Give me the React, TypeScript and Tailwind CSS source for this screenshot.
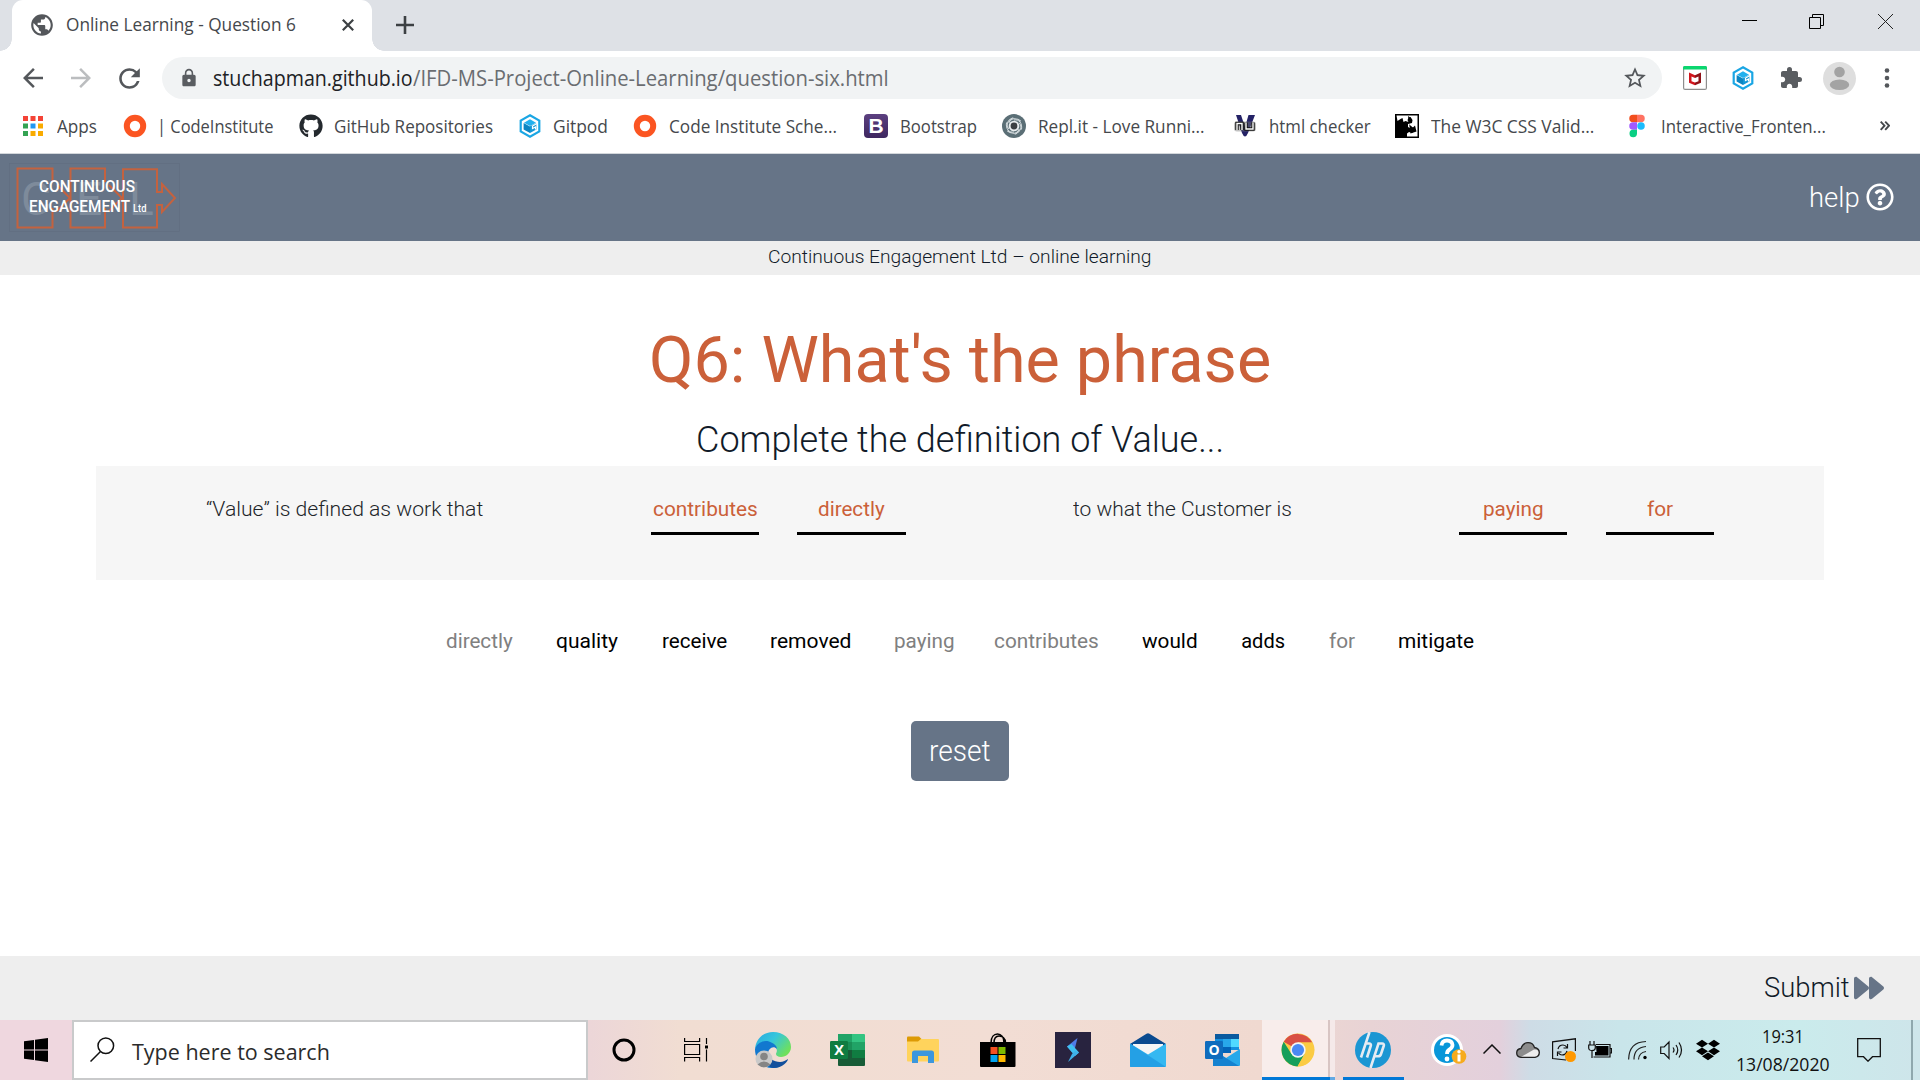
import { useLayoutEffect, useRef, useState, type ReactNode } from "react";
import { MdPublic, MdArrowBack, MdArrowForward, MdRefresh, MdLock, MdStarBorder, MdExtension } from "react-icons/md";
import { FaGithub, FaDropbox, FaForward, FaRegQuestionCircle } from "react-icons/fa";

/* One line of text, condensed or widened to fill its box. */
function Fit({ className, children }: { className: string; children: ReactNode }) {
  const outer = useRef<HTMLSpanElement>(null);
  const inner = useRef<HTMLSpanElement>(null);
  const [scale, setScale] = useState(1);
  useLayoutEffect(() => {
    if (outer.current && inner.current) setScale(outer.current.clientWidth / inner.current.offsetWidth);
  }, []);
  return (
    <span ref={outer} className={`block shrink-0 whitespace-nowrap ${className}`}>
      <span ref={inner} className="inline-block origin-left align-top" style={{ transform: `scaleX(${scale})` }}>
        {children}
      </span>
    </span>
  );
}

function GitpodIcon() {
  return (
    <svg viewBox="0 0 24 24" className="h-6 w-6">
      <path d="M12 1.300 21.300 6.600V17.400L12 22.700 2.700 17.400V6.600Z" fill="#fff" stroke="#1aa6e4" strokeWidth="2.200" />
      <path d="M12 5.300 18 8.700 12 12 6 8.700Z" fill="#22b0ee" />
      <path d="M5.600 9 12 12.500V19L5.600 15.400Z" fill="#0b85c2" />
      <path d="M12 12.300 18.400 9V15.400L12 19Z" fill="#1397d6" />
      <path d="M19.500 9.200 14.500 12V14.500L17.500 13V15.500" fill="none" stroke="#fff" strokeWidth="1.200" />
    </svg>
  );
}

function RingIcon() {
  return (
    <svg viewBox="0 0 24 24" className="h-6 w-6">
      <circle cx="12" cy="12" r="8.2" fill="none" stroke="#fb5522" strokeWidth="6" />
    </svg>
  );
}

function AppsIcon() {
  return (
    <svg viewBox="0 0 20 20" className="h-5 w-5">
      <path d="M0 0h5v5H0zM7.5 0h5v5h-5zM15 0h5v5h-5z" fill="#f44336" />
      <path d="M0 7.5h5v5H0zM0 15h5v5H0z" fill="#34a353" />
      <path d="M7.5 7.5h5v5h-5z" fill="#2196f3" />
      <path d="M15 7.5h5v5h-5zM7.5 15h5v5h-5zM15 15h5v5h-5z" fill="#f9ab00" />
    </svg>
  );
}

function BootstrapIcon() {
  return (
    <span className="flex h-6 w-6 items-center justify-center rounded-[4px] bg-gradient-to-b from-[#5c4080] to-[#3e2760] font-['Liberation_Sans'] text-[21px] leading-none font-bold text-white">
      B
    </span>
  );
}

function ReplIcon() {
  return (
    <svg viewBox="0 0 24 24" className="h-6 w-6">
      <circle cx="12" cy="12" r="12" fill="#5b6f76" />
      <g fill="none" stroke="#d5dcdf" strokeWidth="1">
        {[0, 60, 120, 180, 240, 300].map((a) => (
          <path key={a} d="M12 6C17 5 20.500 9 19.500 15.500" transform={`rotate(${a} 12 12)`} />
        ))}
      </g>
      <circle cx="12" cy="12" r="5.300" fill="#e8ecee" />
      <circle cx="12" cy="12" r="3.400" fill="#3b3f42" />
    </svg>
  );
}

function NuIcon() {
  return (
    <svg viewBox="0 0 24 24" className="h-6 w-6">
      <path d="M3 1h5l4 12 3.500-12H22l-7 18q-3 7-6 0Z" fill="#242266" />
      <rect x="1" y="7.500" width="22" height="10" rx="3" fill="#777" opacity=".45" />
      <path d="M4 16V9.500h5V16M13 8.500v6.500h7V8.500" fill="none" stroke="#111" strokeWidth="3.400" />
      <path d="M4 16V9.500h5V16M13 8.500v6.500h7V8.500" fill="none" stroke="#fff" strokeWidth="1.400" />
    </svg>
  );
}

function CssValidatorIcon() {
  return (
    <svg viewBox="0 0 24 24" className="h-6 w-6">
      <path d="M0 0h24v24H0z" />
      <path
        d="M1.500 1.500h21v21H12v-3l2-1.500 3 1 2-2v-3l-3.500-2-.5 2-2-1v-3l4-1 .5-3-2-3-2 1-1 2 1 2-3-1-2 1-1-4-2 1-3 2Z"
        fill="#fff"
      />
      <path d="M13 2l3 2 .5 4-3 1.500 3 3 .5 2 3-3 1.500 6-3 1-3 1" />
    </svg>
  );
}

function FigmaIcon() {
  return (
    <svg viewBox="0 0 16 24" className="h-6 w-4">
      <path d="M4 .8h4v7.500H4a3.750 3.750 0 0 1 0-7.500Z" fill="#f24e1e" />
      <path d="M8 .8h4a3.750 3.750 0 0 1 0 7.500H8Z" fill="#ff7262" />
      <path d="M4 8.300h4v7.500H4a3.750 3.750 0 0 1 0-7.500Z" fill="#a259ff" />
      <circle cx="12" cy="12" r="3.750" fill="#1abcfe" />
      <path d="M4 15.800h4v3.750a3.750 3.750 0 1 1-4-3.750Z" fill="#0acf83" />
    </svg>
  );
}

function McAfeeIcon() {
  return (
    <svg viewBox="0 0 24 24" className="h-6 w-6">
      <rect x=".6" y=".6" width="22.800" height="22.800" rx="1.500" fill="#fff" stroke="#8e8e8e" strokeWidth="1.200" />
      <path d="M0 3.400V1.500Q0 0 1.500 0h21Q24 0 24 1.500V3.400Z" fill="#0bd66f" />
      <path d="M12 9.300 6 6.500V16.800L12 19.200V16.600L8.500 15.200V10.500L12 12Z" fill="#d0141c" />
      <path d="M12 9.300 18 6.500V16.800L12 19.200V16.600L15.500 15.200V10.500L12 12Z" fill="#8f1218" />
    </svg>
  );
}

function BrowserTabs() {
  return (
    <div className="flex h-[51px] items-center bg-[#dee1e6]">
      <div className="relative ml-3 flex h-[51px] w-[360px] items-center rounded-t-[11px] bg-white">
        <span className="absolute bottom-0 -left-3 h-3 w-3 bg-[radial-gradient(circle_at_0_0,#dee1e6_11.5px,#fff_12px)]" />
        <span className="absolute -right-3 bottom-0 h-3 w-3 bg-[radial-gradient(circle_at_100%_0,#dee1e6_11.5px,#fff_12px)]" />
        <MdPublic className="mb-0.5 ml-[17px] h-[26px] w-[26px] text-[#54575b]" />
        <Fit className="mb-[3px] ml-[11px] w-[230px] text-[18px] leading-6 text-[#45484c]">Online Learning - Question 6</Fit>
        <svg viewBox="0 0 12 12" className="mb-px ml-[46px] h-3 w-3">
          <path d="M.8.8 11.200 11.200M11.200.8.8 11.200" stroke="#3c4043" strokeWidth="2.200" />
        </svg>
      </div>
      <svg viewBox="0 0 18 18" className="mb-px ml-6 h-[18px] w-[18px]">
        <path d="M9 0v18M0 9h18" stroke="#3c4043" strokeWidth="2.600" />
      </svg>
      <div className="mr-[27px] mb-2 ml-auto flex items-center gap-[53px]">
        <svg viewBox="0 0 15 15" className="-mr-px h-[15px] w-[15px]">
          <path d="M0 6.500h15" stroke="#000" />
        </svg>
        <svg viewBox="0 0 15 15" className="mr-px h-[15px] w-[15px]" fill="none" stroke="#000">
          <path d="M.5 3.500h11v11H.5zM3.500 3.500V.5h11v11h-3" />
        </svg>
        <svg viewBox="0 0 15 15" className="h-[15px] w-[15px]" stroke="#222">
          <path d="M0 0l15 15M15 0 0 15" />
        </svg>
      </div>
    </div>
  );
}

function Toolbar() {
  return (
    <div className="flex h-[54px] items-center bg-white">
      <MdArrowBack className="ml-[18px] h-[30px] w-[30px] text-[#54575b]" />
      <MdArrowForward className="ml-[18px] h-[30px] w-[30px] text-[#bbbdbf]" />
      <MdRefresh className="ml-[18px] h-[31px] w-[31px] text-[#54575b]" />
      <div className="ml-[17px] flex h-[42px] w-[1500px] items-center rounded-full bg-[#f1f3f4]">
        <MdLock className="ml-[17px] h-5 w-5 text-[#5a5d61]" />
        <div className="ml-[14px] flex text-[21px] leading-7">
          <Fit className="w-[200px] text-[#202124]">stuchapman.github.io</Fit>
          <Fit className="w-[476px] text-[#6a6d71]">/IFD-MS-Project-Online-Learning/question-six.html</Fit>
        </div>
        <MdStarBorder className="mr-[14px] ml-auto h-[26px] w-[26px] text-[#54575b]" />
      </div>
      <span className="ml-[21px]"><McAfeeIcon /></span>
      <span className="ml-6"><GitpodIcon /></span>
      <MdExtension className="ml-6 h-6 w-6 text-[#5a5d61]" />
      <svg viewBox="0 0 33 33" className="ml-[20px] h-[33px] w-[33px]">
        <circle cx="16.500" cy="16.500" r="16.500" fill="#dedede" />
        <circle cx="16.500" cy="10" r="5.300" fill="#a3a3a3" />
        <ellipse cx="16.500" cy="22.800" rx="9.700" ry="5.200" fill="#a3a3a3" />
      </svg>
      <svg viewBox="0 0 6 22" className="ml-[28px] h-[22px] w-1.5" fill="#54575b">
        <circle cx="3" cy="3.500" r="2.300" />
        <circle cx="3" cy="11" r="2.300" />
        <circle cx="3" cy="18.500" r="2.300" />
      </svg>
    </div>
  );
}

function Bookmarks() {
  return (
    <div className="flex h-[49px] items-center border-b border-[#d3d7db] bg-white pb-[7px] text-[18px] leading-6 text-[#45484c]">
      <span className="ml-[23px]"><AppsIcon /></span>
      <Fit className="ml-[14px] w-10">Apps</Fit>
      <span className="ml-[26px]"><RingIcon /></span>
      <Fit className="ml-[10px] w-[116px]">| CodeInstitute</Fit>
      <FaGithub className="ml-[26px] h-6 w-6 text-[#24292e]" />
      <Fit className="ml-[11px] w-[159px]">GitHub Repositories</Fit>
      <span className="ml-[25px]"><GitpodIcon /></span>
      <Fit className="ml-[11px] w-[55px]">Gitpod</Fit>
      <span className="ml-[25px]"><RingIcon /></span>
      <Fit className="ml-[12px] w-[168px]">Code Institute Sche...</Fit>
      <span className="ml-[27px]"><BootstrapIcon /></span>
      <Fit className="ml-[12px] w-[77px]">Bootstrap</Fit>
      <span className="ml-[25px]"><ReplIcon /></span>
      <Fit className="ml-[12px] w-[167px]">Repl.it - Love Runni...</Fit>
      <span className="ml-[28px]"><NuIcon /></span>
      <Fit className="ml-[12px] w-[102px]">html checker</Fit>
      <span className="ml-[24px]"><CssValidatorIcon /></span>
      <Fit className="ml-[12px] w-[163px]">The W3C CSS Valid...</Fit>
      <span className="ml-[35px]"><FigmaIcon /></span>
      <Fit className="ml-[16px] w-[165px]">Interactive_Fronten...</Fit>
      <svg viewBox="0 0 10 10" className="ml-[54px] h-2.5 w-2.5" fill="none" stroke="#45484c" strokeWidth="1.900">
        <path d="M.7.7 4.500 4.700.7 8.800M5.200.7 9 4.700 5.200 8.800" />
      </svg>
    </div>
  );
}

function CompanyLogo() {
  return (
    <svg viewBox="0 0 174 72" className="ml-2 h-[72px] w-[174px]" fontFamily="Roboto, sans-serif">
      <rect x="1.500" y="1.500" width="170" height="68" fill="none" stroke="#5f6d7f" strokeWidth=".6" />
      <g fill="#a3aebb" fontSize="46" opacity=".4">
        <text x="13" y="53">C</text>
        <text x="68" y="53">E</text>
        <text x="121" y="53">L</text>
      </g>
      <g fill="none" stroke="#c4623f" strokeWidth="2">
        <path d="M44.500 20V6.500h-35V65.500h35V46M97 20V6.500H62.500V65.500H97V46" />
        <path d="M149 30V7.200H115V65.500h34V43h5v7l13-14-13-14v8Z" />
        <path d="M49 23 62 36 49 49M101 23 114 36 101 49" />
      </g>
      <g fill="#fff" fontWeight="500">
        <text x="31" y="29.500" fontSize="16.500" textLength="96" lengthAdjust="spacingAndGlyphs">CONTINUOUS</text>
        <text x="21" y="50" fontSize="16.500" textLength="101" lengthAdjust="spacingAndGlyphs">ENGAGEMENT</text>
        <text x="125" y="50" fontSize="10.500" textLength="13.500" lengthAdjust="spacingAndGlyphs">Ltd</text>
      </g>
    </svg>
  );
}

const blank = "border-b-[3px] border-black h-[38px] flex justify-center text-[#cb6039]";

function Quiz() {
  return (
    <div className="flex h-[866px] flex-col bg-white font-['Roboto',sans-serif]">
      <header className="flex h-[87px] items-center bg-[#667487]">
        <CompanyLogo />
        <div className="mr-[26px] ml-auto flex items-center text-white">
          <Fit className="w-[51px] text-[28px] leading-8 font-[350]">help</Fit>
          <FaRegQuestionCircle className="mb-px ml-[6px] h-[28px] w-[28px]" />
        </div>
      </header>
      <div className="flex h-[34px] justify-center bg-[#eee] pt-[4px]">
        <Fit className="w-[384px] text-[19px] leading-6 font-[350] text-[#111b29]">Continuous Engagement Ltd – online learning</Fit>
      </div>
      <main className="flex h-[681px] flex-col items-center">
        <h1 className="mt-[54px]">
          <Fit className="w-[622px] text-[64px] leading-[64px] font-[450] text-[#cb6039]">Q6: What's the phrase</Fit>
        </h1>
        <h2 className="mt-[27px]">
          <Fit className="w-[528px] text-[36px] leading-10 font-[350] text-[#111b29]">Complete the definition of Value...</Fit>
        </h2>
        <div className="mt-1.5 flex h-[114px] w-[1728px] bg-[#f6f6f6] pt-[31px] text-[20px] leading-6">
          <Fit className="ml-[110px] w-[277px] font-[350] text-[#212529]">“Value” is defined as work that</Fit>
          <div className={`ml-[168px] w-[108px] ${blank}`}><Fit className="w-[105px]">contributes</Fit></div>
          <div className={`ml-[38px] w-[109px] ${blank}`}><Fit className="w-[67px]">directly</Fit></div>
          <Fit className="ml-[167px] w-[219px] font-[350] text-[#212529]">to what the Customer is</Fit>
          <div className={`ml-[167px] w-[108px] ${blank}`}><Fit className="w-[61px]">paying</Fit></div>
          <div className={`ml-[39px] w-[108px] ${blank}`}><Fit className="w-[26px]">for</Fit></div>
        </div>
        <div className="mt-[49px] flex gap-[43.3px] text-[20px] leading-6 text-black">
          <Fit className="w-[67px] text-[#808080]">directly</Fit>
          <Fit className="w-[62px]">quality</Fit>
          <Fit className="w-[65px]">receive</Fit>
          <Fit className="w-[81px]">removed</Fit>
          <Fit className="-mr-[5px] w-[61px] text-[#808080]">paying</Fit>
          <Fit className="w-[105px] text-[#808080]">contributes</Fit>
          <Fit className="w-[56px]">would</Fit>
          <Fit className="w-[44px]">adds</Fit>
          <Fit className="w-[26px] text-[#808080]">for</Fit>
          <Fit className="w-[76px]">mitigate</Fit>
        </div>
        <button className="mt-[68px] flex h-[60px] w-[98px] items-center justify-center rounded-[5px] bg-[#667487] text-white">
          <Fit className="w-[62px] text-[29px] leading-8 font-[350]">reset</Fit>
        </button>
      </main>
      <footer className="flex h-16 items-center bg-[#eee]">
        <Fit className="ml-[1764px] w-[86px] text-[28px] leading-8 font-[350] text-[#111b29]">Submit</Fit>
        <FaForward className="ml-[4px] h-[30px] w-[30px] text-[#667487]" />
      </footer>
    </div>
  );
}

function EdgeIcon() {
  return (
    <svg viewBox="0 0 36 36" className="h-9 w-9">
      <defs>
        <linearGradient id="edgeTop" x1="0" y1="0" x2="1" y2=".6">
          <stop offset="0" stopColor="#2aa8e0" />
          <stop offset=".5" stopColor="#35c6dc" />
          <stop offset="1" stopColor="#6fe05c" />
        </linearGradient>
      </defs>
      <path d="M0 17C1 6 9 0 18 0 29 0 36 7 36 15 36 21 31 25 26 25 22 25 20 23 21.500 20.500 23 17 20 12 14 11 8 10 2 13 0 17Z" fill="url(#edgeTop)" />
      <path d="M0 17C2 11 8 8 14 9.500 19 11 22 14 22 17 18 13 13 17 13 22 13 29 19 35 24 35 11 39 0 31 0 17Z" fill="#1278cf" />
      <path d="M13 21C13 26 19 30 25 30 28 30 31 28 33 27 33 29 28 36 18 36 11 35 9 25 13 21Z" fill="#124f9c" />
      <circle cx="9" cy="27" r="8.500" fill="#c9c9c9" />
      <circle cx="9" cy="24.500" r="3.800" fill="#858585" />
      <path d="M2.500 32.500q6.500-6 13 0Q9 38 2.500 32.500Z" fill="#858585" />
    </svg>
  );
}

function ExcelIcon() {
  return (
    <svg viewBox="0 0 36 36" className="h-9 w-9">
      <path d="M8 2h14v8H8z" fill="#21a366" />
      <path d="M22 2h12q1 0 1 1v7H22z" fill="#33c481" />
      <path d="M8 10h14v8H8z" fill="#1a8f56" />
      <path d="M22 10h13v8H22z" fill="#21a366" />
      <path d="M8 18h14v8H8z" fill="#185c37" />
      <path d="M22 18h13v8H22z" fill="#107c41" />
      <path d="M8 26h27v7q0 1-1 1H9q-1 0-1-1Z" fill="#185c37" />
      <rect y="9" width="18" height="18" rx="1.200" fill="#107c41" />
      <text x="9" y="23" textAnchor="middle" fill="#fff" fontSize="14.500" fontWeight="bold" fontFamily="Open Sans, sans-serif">X</text>
    </svg>
  );
}

function ExplorerIcon() {
  return (
    <svg viewBox="0 0 32 28" className="h-7 w-8">
      <path d="M0 1.500Q0 .5 1 .5h11l3 3V6H0Z" fill="#dd9a05" />
      <path d="M0 5.500h11l3-2.500h17q1 0 1 1v20.500q0 1-1 1H1q-1 0-1-1Z" fill="#ffd35c" />
      <path d="M5 27V17q0-2.500 2.500-2.500h17Q27 14.500 27 17v10h-6v-7H11v7Z" fill="#3c97dd" />
    </svg>
  );
}

function StoreIcon() {
  return (
    <svg viewBox="0 0 36 34" className="h-[34px] w-9">
      <g fill="none" stroke="#000" strokeWidth="1.500">
        <path d="M11 10C11 4 14 1 17.500 1S24 4 24 10M14 10C14 5 16 3 19 3S25.500 5 25.500 10" />
      </g>
      <path d="M0 9h35.500v24q0 1-1 1H1q-1 0-1-1Z" />
      <path d="M10.500 14h7v7h-7z" fill="#f25022" />
      <path d="M18.500 14h7v7h-7z" fill="#7fba00" />
      <path d="M10.500 22h7v7h-7z" fill="#00a4ef" />
      <path d="M18.500 22h7v7h-7z" fill="#ffb900" />
    </svg>
  );
}

function SwitchAppIcon() {
  return (
    <svg viewBox="0 0 36 36" className="h-9 w-9">
      <path d="M0 0h36v36H0z" fill="#28233f" />
      <path d="M22.500 6 12 14.500 17 20 20 16Z" fill="#4f7ce8" />
      <path d="M12 14.500 16.500 12 24 20.500 20 24Z" fill="#3fc0f0" />
      <path d="M24 20.500 13 30 17 22 20 19Z" fill="#3fb0e8" />
    </svg>
  );
}

function MailIcon() {
  return (
    <svg viewBox="0 0 36 34" className="h-[34px] w-9">
      <path d="M0 11 16.500.7q1.500-1 3 0L36 11 28 18H8Z" fill="#0a4a8f" />
      <path d="M3 11h30v16H3z" fill="#f5f5f5" />
      <path d="M0 10.500 18 21.500 36 10.500V33q0 1-1 1H1q-1 0-1-1Z" fill="#35b8f1" />
      <path d="M0 34V10.500L36 34Z" fill="#1e96e0" opacity=".7" />
    </svg>
  );
}

function OutlookIcon() {
  return (
    <svg viewBox="0 0 36 36" className="h-9 w-9">
      <path d="M10 2h24v16H10z" fill="#1490df" />
      <path d="M10 2h24v5H10z" fill="#0a5a9f" />
      <path d="M18 7h8v8h-8z" fill="#28a8ea" />
      <path d="M26 7h8v8h-8z" fill="#50d9ff" />
      <path d="M18 15h8v6h-8z" fill="#0364b8" />
      <path d="M8 18 21 26 35 17v16q0 1-1 1H9q-1 0-1-1Z" fill="#28a8ea" />
      <path d="M8 34V18L34 34Z" fill="#1582d0" />
      <rect y="9" width="18" height="18" rx="1.200" fill="#0f6cbd" />
      <text x="9" y="23" textAnchor="middle" fill="#fff" fontSize="14" fontWeight="bold" fontFamily="Open Sans, sans-serif">O</text>
    </svg>
  );
}

function ChromeIcon() {
  return (
    <svg viewBox="0 0 34 34" className="h-[34px] w-[34px]">
      <circle cx="17" cy="17" r="16.500" fill="#fbcb43" />
      <path d="M17 17 2.700 8.800A16.500 16.500 0 0 1 31.300 9.500H17Z" fill="#d94f43" />
      <path d="M2.700 8.800A16.500 16.500 0 0 0 16.500 33.500L24 20.500 10.500 21Z" fill="#159f5b" />
      <path d="M17 9.500H31.300A16.500 16.500 0 0 1 16.500 33.500L23.500 21Z" fill="#fbcb43" />
      <circle cx="17" cy="17" r="7.700" fill="#f4f4f4" />
      <circle cx="17" cy="17" r="6.100" fill="#4a89f3" />
    </svg>
  );
}

function HpIcon() {
  return (
    <svg viewBox="0 0 36 36" className="h-9 w-9">
      <circle cx="18" cy="18" r="18" fill="#1b96d3" />
      <g fill="none" stroke="#e6ebf2" strokeWidth="2.600">
        <path d="M14.500 0 6 25.500M10.800 11.500H14q2.500 0 1.700 2.500L12 25.500" />
        <path d="M15.500 36 23.500 11.500H27q2.500 0 1.700 2.500L26 22q-.8 2.300-3 2.300H19.500" />
      </g>
    </svg>
  );
}

function SupportIcon() {
  return (
    <svg viewBox="0 0 36 34" className="h-[34px] w-9">
      <circle cx="16" cy="17" r="16" fill="#fff" />
      <circle cx="16" cy="17" r="13" fill="#0996d9" />
      <path d="M10.500 12.500Q11 7.500 16 7.500T21.500 12Q21.500 14.500 18.500 16.500 16 18 16 21" fill="none" stroke="#fff" strokeWidth="3.800" />
      <circle cx="16" cy="26" r="2.400" fill="#fff" />
      <circle cx="28" cy="23.500" r="7.300" fill="#f6ab1d" />
      <path d="M28 21.500v7" stroke="#fff" strokeWidth="3" />
      <circle cx="28" cy="18.800" r="1.700" fill="#fff" />
    </svg>
  );
}

function Tray() {
  return (
    <>
      <svg viewBox="0 0 18 10" className="mb-0.5 ml-4 h-2.5 w-[18px]" fill="none" stroke="#111" strokeWidth="1.500">
        <path d="M.5 9.500 9 1l8.500 8.500" />
      </svg>
      <svg viewBox="0 0 24 16" className="ml-[15px] h-4 w-6">
        <path d="M5 15.300Q.7 15 .7 11T5 6.500Q7 .7 12 .7T18.500 5.500Q23.300 6.500 23.300 10.500T19 15.300Z" fill="#8c8c8c" />
        <path d="M5 15 18 7.500Q23 7 23 11T19 15Z" fill="#eee" />
        <path d="M5 15.300Q.7 15 .7 11T5 6.500Q7 .7 12 .7T18.500 5.500Q23.300 6.500 23.300 10.500T19 15.300Z" fill="none" stroke="#222" strokeWidth="1.300" />
      </svg>
      <svg viewBox="0 0 24 24" className="ml-3 h-6 w-6" fill="none" stroke="#111" strokeWidth="1.200">
        <path d="M23.400 13V.8L.6 3.800V20.500L14 22" />
        <path d="M6 11q1-4 5-4 2.500 0 4 2.500M15.500 6v4h-4M15 13q-1 4-5 4-2 0-3.500-2M5.500 18v-4h4" />
        <circle cx="18.500" cy="18.500" r="5.500" fill="#ff9800" stroke="none" />
      </svg>
      <svg viewBox="0 0 24 18" className="ml-3 h-[18px] w-6" fill="none" stroke="#111" strokeWidth="1.200">
        <path d="M8 3.500h14v12.500H5.500M22 7.500h1.500v4.500H22" />
        <path d="M8 5h12.500v9.500H7V11h1.500Z" fill="#000" stroke="none" />
        <path d="M2 0v4M6 0v4M.7 4h6.600V7q0 2.500-3.300 2.500T.7 7ZM4 9.500V17" />
      </svg>
      <svg viewBox="0 0 20 20" className="ml-4 h-5 w-5" fill="none" stroke="#222" strokeWidth="1.200">
        <path d="M.6 19.500Q1 2 18 1.500M6 19.500Q6 7.500 18 6.500M10.500 19.500Q11 12.500 18 11.500" />
        <circle cx="17" cy="17.500" r="1.700" fill="#000" stroke="none" />
      </svg>
      <svg viewBox="0 0 24 20" className="ml-3 h-5 w-6" fill="none" stroke="#111" strokeWidth="1.200">
        <path d="M.7 7v6.500h3.500L9 18.500V2L4.200 7ZM13 7.500q2 2.500 0 5M16 5q3.500 5 0 10M19 2.500q5 7.500 0 15" />
      </svg>
      <FaDropbox className="ml-[12px] h-6 w-6 text-black" />
      <div className="ml-4 flex w-[94px] flex-col items-center text-[18px] leading-7 text-[#111]">
        <Fit className="w-[42px]">19:31</Fit>
        <Fit className="w-[94px]">13/08/2020</Fit>
      </div>
      <svg viewBox="0 0 24 24" className="ml-[27px] h-6 w-6" fill="none" stroke="#111" strokeWidth="1.300">
        <path d="M.7.7h22.600v18H15.500l-4.500 4.500-4.500-4.500H.7Z" />
      </svg>
      <span className="ml-[30px] h-[60px] w-0.5 bg-[#8fa7ad]" />
    </>
  );
}

function Taskbar() {
  return (
    <div className="flex h-[60px] items-center bg-[linear-gradient(90deg,#efd7df_0px,#efd7df_70px,#ecd6d8_590px,#f1ddd2_680px,#f2ddd4_1000px,#f0d9d0_1260px,#e8d3d5_1370px,#e3d0dc_1500px,#cedce6_1530px,#c9e5ea_1620px,#caebec_1800px,#cee5ea_1920px)]">
      <svg viewBox="0 0 24 24" className="ml-6 h-6 w-6">
        <path d="M0 3.300 10 2V11.500H0ZM11 1.800 24 0V11.500H11ZM0 12.500H10V22L0 20.700ZM11 12.500H24V24L11 22.200Z" />
      </svg>
      <div className="ml-6 flex h-[60px] w-[516px] items-center border-2 border-[#c9cacb] bg-white">
        <svg viewBox="0 0 25 25" className="mb-0.5 ml-4 h-[25px] w-[25px]" fill="none" stroke="#111" strokeWidth="1.500">
          <circle cx="15.800" cy="8.800" r="7.800" />
          <path d="M10.500 14.500.5 24.500" />
        </svg>
        <Fit className="mt-1 ml-[17px] w-[198px] text-[21.5px] leading-7 text-[#2b2b2b]">Type here to search</Fit>
      </div>
      <svg viewBox="0 0 24 24" className="ml-6 h-6 w-6">
        <circle cx="12" cy="12" r="10" fill="none" stroke="#000" strokeWidth="3" />
      </svg>
      <svg viewBox="0 0 24 24" className="ml-12 h-6 w-6" fill="none" stroke="#000" strokeWidth="1.200">
        <path d="M.6 0v3.500h15V0M.6 6.500h15v10H.6zM.6 23.500v-4h15v4M22.500 0v6M22.500 11.500V23.500" />
        <path d="M21 7.500h3v3h-3z" fill="#000" stroke="none" />
      </svg>
      <span className="ml-[47px]"><EdgeIcon /></span>
      <span className="ml-[39px]"><ExcelIcon /></span>
      <span className="ml-[41px]"><ExplorerIcon /></span>
      <span className="ml-[41px]"><StoreIcon /></span>
      <span className="ml-[39px]"><SwitchAppIcon /></span>
      <span className="ml-[39px]"><MailIcon /></span>
      <span className="ml-[39px]"><OutlookIcon /></span>
      <div className="ml-[21px] flex h-[60px] w-[66px] items-center justify-center border-b-[3px] border-[#0078d7] bg-[#f8edeb] pt-0.5 pl-[5px]">
        <ChromeIcon />
      </div>
      <span className="h-[60px] w-0.5 border-b-[3px] border-[#0078d7] bg-[#d8c5c3]" />
      <span className="h-[60px] w-[5px] border-b-[3px] border-[#62a9e4] bg-[#f5e9e9]" />
      <div className="ml-2 flex h-[60px] w-[61px] items-center justify-center border-b-[3px] border-[#0078d7] pt-[3px] pr-0.5">
        <HpIcon />
      </div>
      <span className="ml-[27px]"><SupportIcon /></span>
      <Tray />
    </div>
  );
}

export default function App() {
  return (
    <div className="h-[1080px] w-[1920px] overflow-hidden bg-white font-['Open_Sans','Noto_Sans',sans-serif] [&_svg]:block [&_svg]:shrink-0">
      <BrowserTabs />
      <Toolbar />
      <Bookmarks />
      <Quiz />
      <Taskbar />
    </div>
  );
}
